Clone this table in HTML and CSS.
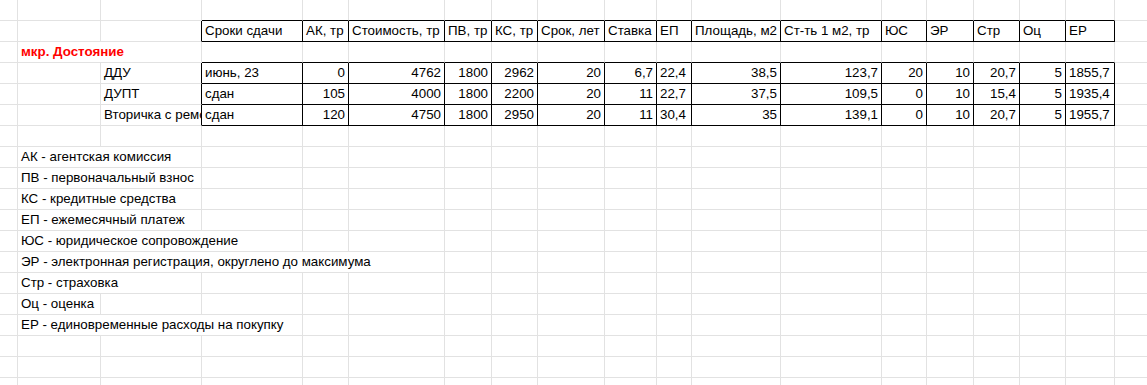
FILE: index.html
```html
<!DOCTYPE html>
<html lang="ru">
<head>
<meta charset="utf-8">
<title>Sheet</title>
<link rel="stylesheet" href="styles.css">
</head>
<body>
<div class="sheet">
  <!-- row 1 -->
  <div class="c"></div><div class="c"></div><div class="c"></div>
  <div class="c bb"></div><div class="c bb"></div><div class="c bb"></div><div class="c bb"></div><div class="c bb"></div><div class="c bb"></div><div class="c bb"></div><div class="c bb"></div><div class="c bb"></div><div class="c bb"></div><div class="c bb"></div><div class="c bb"></div><div class="c bb"></div><div class="c bb"></div><div class="c bb"></div>
  <div class="c"></div>

  <!-- row 2: header -->
  <div class="c"></div><div class="c"></div><div class="c br"></div>
  <div class="c t">Сроки сдачи</div>
  <div class="c t">АК, тр</div>
  <div class="c t">Стоимость, тр</div>
  <div class="c t">ПВ, тр</div>
  <div class="c t">КС, тр</div>
  <div class="c t">Срок, лет</div>
  <div class="c t">Ставка</div>
  <div class="c t">ЕП</div>
  <div class="c t">Площадь, м2</div>
  <div class="c t">Ст-ть 1 м2, тр</div>
  <div class="c t">ЮС</div>
  <div class="c t">ЭР</div>
  <div class="c t">Стр</div>
  <div class="c t">Оц</div>
  <div class="c t">ЕР</div>
  <div class="c"></div>

  <!-- row 3 -->
  <div class="c"></div>
  <div class="c s2 group">мкр. Достояние</div>
  <div class="c bb"></div><div class="c bb"></div><div class="c bb"></div><div class="c bb"></div><div class="c bb"></div><div class="c bb"></div><div class="c bb"></div><div class="c bb"></div><div class="c bb"></div><div class="c bb"></div><div class="c bb"></div><div class="c bb"></div><div class="c bb"></div><div class="c bb"></div><div class="c bb"></div>
  <div class="c"></div>

  <!-- row 4 -->
  <div class="c"></div><div class="c"></div>
  <div class="c br">ДДУ</div>
  <div class="c t">июнь, 23</div>
  <div class="c t r">0</div>
  <div class="c t r">4762</div>
  <div class="c t r">1800</div>
  <div class="c t r">2962</div>
  <div class="c t r">20</div>
  <div class="c t r">6,7</div>
  <div class="c t">22,4</div>
  <div class="c t r">38,5</div>
  <div class="c t r">123,7</div>
  <div class="c t r">20</div>
  <div class="c t r">10</div>
  <div class="c t r">20,7</div>
  <div class="c t r">5</div>
  <div class="c t">1855,7</div>
  <div class="c"></div>

  <!-- row 5 -->
  <div class="c"></div><div class="c"></div>
  <div class="c br">ДУПТ</div>
  <div class="c t">сдан</div>
  <div class="c t r">105</div>
  <div class="c t r">4000</div>
  <div class="c t r">1800</div>
  <div class="c t r">2200</div>
  <div class="c t r">20</div>
  <div class="c t r">11</div>
  <div class="c t">22,7</div>
  <div class="c t r">37,5</div>
  <div class="c t r">109,5</div>
  <div class="c t r">0</div>
  <div class="c t r">10</div>
  <div class="c t r">15,4</div>
  <div class="c t r">5</div>
  <div class="c t">1935,4</div>
  <div class="c"></div>

  <!-- row 6 -->
  <div class="c"></div><div class="c"></div>
  <div class="c br clip">Вторичка с ремонтом</div>
  <div class="c t">сдан</div>
  <div class="c t r">120</div>
  <div class="c t r">4750</div>
  <div class="c t r">1800</div>
  <div class="c t r">2950</div>
  <div class="c t r">20</div>
  <div class="c t r">11</div>
  <div class="c t">30,4</div>
  <div class="c t r">35</div>
  <div class="c t r">139,1</div>
  <div class="c t r">0</div>
  <div class="c t r">10</div>
  <div class="c t r">20,7</div>
  <div class="c t r">5</div>
  <div class="c t">1955,7</div>
  <div class="c"></div>

  <!-- row 7 -->
  <div class="c"></div><div class="c"></div><div class="c"></div><div class="c"></div><div class="c"></div><div class="c"></div><div class="c"></div><div class="c"></div><div class="c"></div><div class="c"></div><div class="c"></div><div class="c"></div><div class="c"></div><div class="c"></div><div class="c"></div><div class="c"></div><div class="c"></div><div class="c"></div><div class="c"></div>

  <!-- row 8 -->
  <div class="c"></div>
  <div class="c s2">АК - агентская комиссия</div>
  <div class="c"></div><div class="c"></div><div class="c"></div><div class="c"></div><div class="c"></div><div class="c"></div><div class="c"></div><div class="c"></div><div class="c"></div><div class="c"></div><div class="c"></div><div class="c"></div><div class="c"></div><div class="c"></div><div class="c"></div><div class="c"></div>

  <!-- row 9 -->
  <div class="c"></div>
  <div class="c s2">ПВ - первоначальный взнос</div>
  <div class="c"></div><div class="c"></div><div class="c"></div><div class="c"></div><div class="c"></div><div class="c"></div><div class="c"></div><div class="c"></div><div class="c"></div><div class="c"></div><div class="c"></div><div class="c"></div><div class="c"></div><div class="c"></div><div class="c"></div><div class="c"></div>

  <!-- row 10 -->
  <div class="c"></div>
  <div class="c s2">КС - кредитные средства</div>
  <div class="c"></div><div class="c"></div><div class="c"></div><div class="c"></div><div class="c"></div><div class="c"></div><div class="c"></div><div class="c"></div><div class="c"></div><div class="c"></div><div class="c"></div><div class="c"></div><div class="c"></div><div class="c"></div><div class="c"></div><div class="c"></div>

  <!-- row 11 -->
  <div class="c"></div>
  <div class="c s2">ЕП - ежемесячный платеж</div>
  <div class="c"></div><div class="c"></div><div class="c"></div><div class="c"></div><div class="c"></div><div class="c"></div><div class="c"></div><div class="c"></div><div class="c"></div><div class="c"></div><div class="c"></div><div class="c"></div><div class="c"></div><div class="c"></div><div class="c"></div><div class="c"></div>

  <!-- row 12 -->
  <div class="c"></div>
  <div class="c s3">ЮС - юридическое сопровождение</div>
  <div class="c"></div><div class="c"></div><div class="c"></div><div class="c"></div><div class="c"></div><div class="c"></div><div class="c"></div><div class="c"></div><div class="c"></div><div class="c"></div><div class="c"></div><div class="c"></div><div class="c"></div><div class="c"></div><div class="c"></div>

  <!-- row 13 -->
  <div class="c"></div>
  <div class="c s5">ЭР - электронная регистрация, округлено до максимума</div>
  <div class="c"></div><div class="c"></div><div class="c"></div><div class="c"></div><div class="c"></div><div class="c"></div><div class="c"></div><div class="c"></div><div class="c"></div><div class="c"></div><div class="c"></div><div class="c"></div><div class="c"></div>

  <!-- row 14 -->
  <div class="c"></div>
  <div class="c s2">Стр - страховка</div>
  <div class="c"></div><div class="c"></div><div class="c"></div><div class="c"></div><div class="c"></div><div class="c"></div><div class="c"></div><div class="c"></div><div class="c"></div><div class="c"></div><div class="c"></div><div class="c"></div><div class="c"></div><div class="c"></div><div class="c"></div><div class="c"></div>

  <!-- row 15 -->
  <div class="c"></div>
  <div class="c">Оц - оценка</div>
  <div class="c"></div><div class="c"></div><div class="c"></div><div class="c"></div><div class="c"></div><div class="c"></div><div class="c"></div><div class="c"></div><div class="c"></div><div class="c"></div><div class="c"></div><div class="c"></div><div class="c"></div><div class="c"></div><div class="c"></div><div class="c"></div><div class="c"></div>

  <!-- row 16 -->
  <div class="c"></div>
  <div class="c s3">ЕР - единовременные расходы на покупку</div>
  <div class="c"></div><div class="c"></div><div class="c"></div><div class="c"></div><div class="c"></div><div class="c"></div><div class="c"></div><div class="c"></div><div class="c"></div><div class="c"></div><div class="c"></div><div class="c"></div><div class="c"></div><div class="c"></div><div class="c"></div>

  <!-- rows 17-19 -->
  <div class="c"></div><div class="c"></div><div class="c"></div><div class="c"></div><div class="c"></div><div class="c"></div><div class="c"></div><div class="c"></div><div class="c"></div><div class="c"></div><div class="c"></div><div class="c"></div><div class="c"></div><div class="c"></div><div class="c"></div><div class="c"></div><div class="c"></div><div class="c"></div><div class="c"></div>
  <div class="c"></div><div class="c"></div><div class="c"></div><div class="c"></div><div class="c"></div><div class="c"></div><div class="c"></div><div class="c"></div><div class="c"></div><div class="c"></div><div class="c"></div><div class="c"></div><div class="c"></div><div class="c"></div><div class="c"></div><div class="c"></div><div class="c"></div><div class="c"></div><div class="c"></div>
  <div class="c"></div><div class="c"></div><div class="c"></div><div class="c"></div><div class="c"></div><div class="c"></div><div class="c"></div><div class="c"></div><div class="c"></div><div class="c"></div><div class="c"></div><div class="c"></div><div class="c"></div><div class="c"></div><div class="c"></div><div class="c"></div><div class="c"></div><div class="c"></div><div class="c"></div>
</div>
</body>
</html>
```

FILE: styles.css
```css
html, body {
  margin: 0;
  padding: 0;
  background: #ffffff;
  overflow: hidden;
}

.sheet {
  display: grid;
  grid-template-columns: 18px 83px 101px 101px 46px 96px 47px 46px 67px 52px 35px 89px 101px 45px 47px 46px 46px 49px 60px;
  grid-auto-rows: 21px;
  font-family: "Liberation Sans", Arial, sans-serif;
  font-size: 13.333px;
  color: #000000;
}

.c {
  box-sizing: border-box;
  border-right: 1px solid #e2e2e2;
  border-bottom: 1px solid #e2e2e2;
  padding: 0 3px;
  line-height: 20px;
  white-space: nowrap;
  overflow: hidden;
}

.clip {
  padding-right: 0;
  text-overflow: clip;
}

.r {
  text-align: right;
}

.s2 { grid-column: span 2; }
.s3 { grid-column: span 3; }
.s5 { grid-column: span 5; }

.bb {
  border-bottom-color: #000000;
}

.br {
  border-right-color: #000000;
}

.t {
  border-right-color: #000000;
  border-bottom-color: #000000;
}

.group {
  color: #ff0000;
  font-weight: bold;
}
```
